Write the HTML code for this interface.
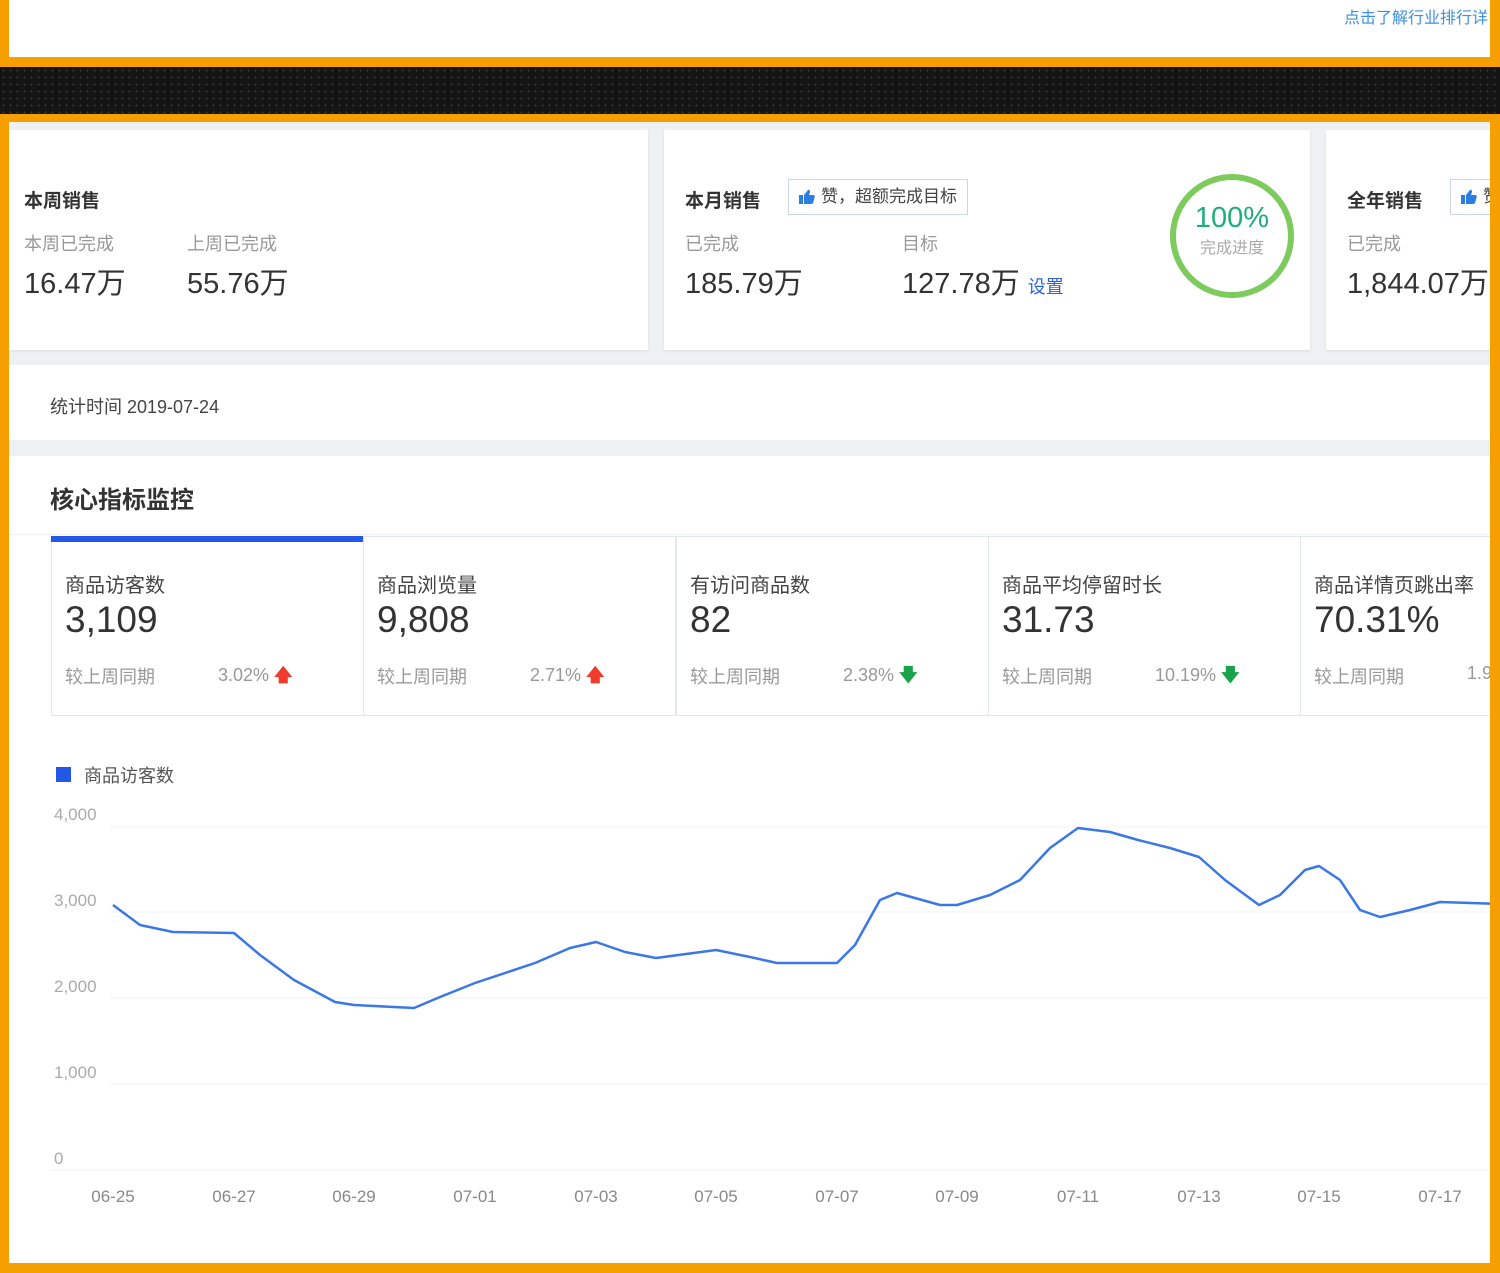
<!DOCTYPE html>
<html><head><meta charset="utf-8"><style>
*{margin:0;padding:0;box-sizing:border-box}
body{width:1500px;height:1273px;position:relative;overflow:hidden;background:#f5a000;font-family:"Liberation Sans","Noto Sans CJK SC",sans-serif;color:#333}
.a{position:absolute;white-space:nowrap}
#top{left:9px;top:0;width:1481px;height:57px;background:#fff}
#blk{left:0;top:67px;width:1500px;height:47px;background:#141414;background-image:radial-gradient(#3a3a3a 0.8px,transparent 1px);background-size:7px 7px}
#main{left:9px;top:122px;width:1481px;height:1141px;background:#eef0f3;overflow:hidden}
.card{position:absolute;background:#fff;top:8px;height:220px;box-shadow:0 1px 3px rgba(0,0,0,.08)}
.t{font-size:19px;font-weight:bold;color:#333}
.l{font-size:18px;color:#999}
.v{font-size:29px;color:#333}
.badge{border:1px solid #c9d7ee;font-size:17px;color:#444;padding:4px 10px;height:36px;line-height:26px}
.badge svg{vertical-align:-2px;margin-right:6px}
.mc{position:absolute;top:414px;width:313px;height:180px;border:1px solid #e3e8ee;background:#fff}
.mc .n{position:absolute;left:13px;top:32px;font-size:20px;color:#444}
.mc .b{position:absolute;left:13px;top:62px;font-size:37px;color:#333}
.mc .c{position:absolute;left:13px;top:126px;font-size:18px;color:#999}
.mc .p{position:absolute;left:166px;top:126px;font-size:18px;color:#999}
.up{color:#f03a2c;font-weight:bold}.dn{color:#1aa24a;font-weight:bold}
</style></head><body>
<div class="a" id="top"><span class="a" style="right:2px;top:4px;font-size:16px;color:#3d8fe0">点击了解行业排行详</span></div>
<div class="a" id="blk"></div>
<div class="a" id="main">
 <div class="card" style="left:0;width:639px">
  <div class="a t" style="left:15px;top:56px">本周销售</div>
  <div class="a l" style="left:15px;top:100px">本周已完成</div>
  <div class="a l" style="left:178px;top:100px">上周已完成</div>
  <div class="a v" style="left:15px;top:130px">16.47万</div>
  <div class="a v" style="left:178px;top:130px">55.76万</div>
 </div>
 <div class="card" style="left:655px;width:646px">
  <div class="a t" style="left:21px;top:56px">本月销售</div>
  <div class="a badge" style="left:124px;top:49px"><svg width="16" height="15" viewBox="0 0 16 15"><rect x="0" y="6" width="4" height="9" fill="#2a7de1"/><path d="M5 6 L9 1 Q11 0 11 3 L10 6 L15 6 Q16 7 15.5 9 L14 14 Q13.5 15 12 15 L5 15Z" fill="#2a7de1"/></svg>赞，超额完成目标</div>
  <div class="a l" style="left:21px;top:100px">已完成</div>
  <div class="a l" style="left:238px;top:100px">目标</div>
  <div class="a v" style="left:21px;top:130px">185.79万</div>
  <div class="a v" style="left:238px;top:130px">127.78万 <span style="font-size:18px;color:#2a62e0">设置</span></div>
  <div class="a" style="left:506px;top:44px;width:124px;height:124px;border:6px solid #7dcb5d;border-radius:50%;text-align:center">
   <div style="font-size:29px;color:#1fae7a;margin-top:22px;line-height:32px">100%</div>
   <div style="font-size:16px;color:#aaa">完成进度</div>
  </div>
 </div>
 <div class="card" style="left:1317px;width:300px">
  <div class="a t" style="left:21px;top:56px">全年销售</div>
  <div class="a badge" style="left:124px;top:49px"><svg width="16" height="15" viewBox="0 0 16 15"><rect x="0" y="6" width="4" height="9" fill="#2a7de1"/><path d="M5 6 L9 1 Q11 0 11 3 L10 6 L15 6 Q16 7 15.5 9 L14 14 Q13.5 15 12 15 L5 15Z" fill="#2a7de1"/></svg>赞</div>
  <div class="a l" style="left:21px;top:100px">已完成</div>
  <div class="a v" style="left:21px;top:130px">1,844.07万</div>
 </div>
 <div class="a" style="left:0;top:243px;width:1481px;height:75px;background:#fff"><span class="a" style="left:41px;top:28px;font-size:18px;color:#444">统计时间 2019-07-24</span></div>
 <div class="a" style="left:0;top:334px;width:1481px;height:807px;background:#fff">
  <div class="a" style="left:41px;top:24px;font-size:24px;font-weight:bold;color:#333">核心指标监控</div>
  <div class="a" style="left:0;top:78px;width:1481px;height:1px;background:#eef0f3"></div>
 </div>
 <div class="mc" style="left:42px"><div class="a" style="left:-1px;top:-1px;width:313px;height:6px;background:#2357e6"></div><div class="n">商品访客数</div><div class="b">3,109</div><div class="c">较上周同期</div><div class="p">3.02% <span class="up">🡅</span></div></div>
 <div class="mc" style="left:354px"><div class="n">商品浏览量</div><div class="b">9,808</div><div class="c">较上周同期</div><div class="p">2.71% <span class="up">🡅</span></div></div>
 <div class="mc" style="left:667px"><div class="n">有访问商品数</div><div class="b">82</div><div class="c">较上周同期</div><div class="p">2.38% <span class="dn">🡇</span></div></div>
 <div class="mc" style="left:979px"><div class="n">商品平均停留时长</div><div class="b">31.73</div><div class="c">较上周同期</div><div class="p">10.19% <span class="dn">🡇</span></div></div>
 <div class="mc" style="left:1291px"><div class="n">商品详情页跳出率</div><div class="b">70.31%</div><div class="c">较上周同期</div><div class="p">1.9</div></div>
 <svg class="a" style="left:-9px;top:-122px" width="1500" height="1273">
  <rect x="56" y="767" width="15" height="15" fill="#2357e6"/>
  <text x="84" y="782" font-size="18" fill="#555" font-family="Liberation Sans,Noto Sans CJK SC,sans-serif">商品访客数</text>
  <g stroke="#eef0f3" stroke-width="1"><line x1="110" y1="827" x2="1500" y2="827"/><line x1="110" y1="912" x2="1500" y2="912"/><line x1="110" y1="998" x2="1500" y2="998"/><line x1="110" y1="1084" x2="1500" y2="1084"/><line x1="50" y1="1170" x2="1500" y2="1170"/></g>
  <g font-size="17" fill="#aaa" font-family="Liberation Sans,sans-serif">
   <text x="54" y="820">4,000</text><text x="54" y="906">3,000</text><text x="54" y="992">2,000</text><text x="54" y="1078">1,000</text><text x="54" y="1164">0</text>
  </g>
  <g font-size="17" fill="#888" font-family="Liberation Sans,sans-serif" text-anchor="middle">
   <text x="113" y="1202">06-25</text><text x="234" y="1202">06-27</text><text x="354" y="1202">06-29</text><text x="475" y="1202">07-01</text><text x="596" y="1202">07-03</text><text x="716" y="1202">07-05</text><text x="837" y="1202">07-07</text><text x="957" y="1202">07-09</text><text x="1078" y="1202">07-11</text><text x="1199" y="1202">07-13</text><text x="1319" y="1202">07-15</text><text x="1440" y="1202">07-17</text>
  </g>
  <polyline fill="none" stroke="#3b78e7" stroke-width="2.5" stroke-linejoin="round" points="113,905 140,925 173,932 234,933 260,955 294,980 335,1002 354,1005 414,1008 440,997 475,983 535,963 570,948 596,942 625,952 656,958 716,950 750,957 777,963 837,963 855,945 880,900 897,893 940,905 957,905 990,895 1020,880 1050,848 1078,828 1110,832 1138,840 1170,848 1199,857 1225,880 1259,905 1280,895 1305,870 1319,866 1340,880 1360,910 1380,917 1410,910 1440,902 1500,904"/>
 </svg>
</div>
</body></html>
